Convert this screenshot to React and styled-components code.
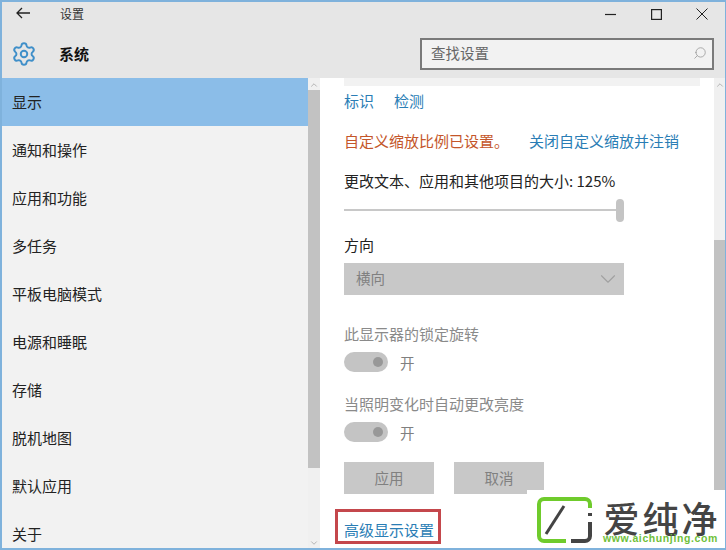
import React from "react";
import styled, { createGlobalStyle } from "styled-components";
import { ChevronDown, ChevronUp, Search, Settings } from "lucide-react";

const GlobalStyle = createGlobalStyle`
  html, body {
    margin: 0;
    padding: 0;
    background: #fff;
  }
  * {
    box-sizing: border-box;
  }
`;

const Window = styled.div`
  position: relative;
  width: 726px;
  height: 550px;
  display: flex;
  flex-direction: column;
  overflow: hidden;
  border: 1px solid #7fb2dc;
  border-width: 2px 1px 2px 2px;
  font-family: "Noto Sans CJK SC", "Noto Sans", sans-serif;
  font-size: 14px;
  color: #222;
`;

const Header = styled.header`
  height: 76px;
  flex: none;
  background: #e6e6e6;
`;

const TitleBar = styled.div`
  height: 22px;
  display: flex;
  align-items: center;
`;

const BackButton = styled.span`
  width: 58px;
  padding-left: 14px;
  display: flex;
  align-items: center;
`;

const WindowTitle = styled.span`
  flex: 1;
  font-size: 12px;
  color: #333;
`;

const WindowControls = styled.div`
  display: flex;
`;

const WindowControl = styled.span`
  width: 46px;
  height: 20px;
  margin-top: 2px;
  display: flex;
  align-items: center;
  justify-content: center;
`;

const SectionBar = styled.div`
  height: 54px;
  display: flex;
  align-items: center;
  padding: 6px 11px 0 9px;
`;

const SectionIcon = styled(Settings)`
  color: #3f8fc9;
  flex: none;
`;

const SectionTitle = styled.h1`
  flex: 1;
  margin: 0 0 2px 22px;
  font-size: 15px;
  font-weight: 700;
  color: #111;
`;

const SearchBox = styled.div`
  width: 294px;
  height: 32px;
  display: flex;
  align-items: center;
  justify-content: space-between;
  padding: 0 5px 3px 9px;
  background: #f2f2f2;
  border: 2px solid #7a7a7a;
  font-size: 14.5px;
  color: #666;
`;

const SearchIcon = styled(Search)`
  color: #9a9a9a;
  transform: scaleX(-1);
`;

const Body = styled.div`
  flex: 1;
  min-height: 0;
  display: flex;
`;

const Sidebar = styled.nav`
  width: 306px;
  flex: none;
  background: #f2f2f2;
`;

const NavItem = styled.div`
  height: 48px;
  display: flex;
  align-items: center;
  padding: 0 0 2px 10px;
  font-size: 15px;
  color: #222;
  background: ${(p) => (p.$active ? "#8bbde8" : "transparent")};
`;

const ScrollTrack = styled.div`
  width: ${(p) => p.$width}px;
  flex: none;
  display: flex;
  flex-direction: column;
  background: #f0f0f0;
`;

const ScrollCap = styled.div`
  height: ${(p) => p.$height}px;
  flex: none;
  display: flex;
  justify-content: center;
  align-items: ${(p) => (p.$end ? "flex-end" : "flex-start")};
  padding-top: ${(p) => (p.$end ? 0 : 2)}px;
  color: #a8a8a8;
`;

const ScrollThumb = styled.div`
  flex: ${(p) => p.$flex};
  background: #c2c2c2;
`;

const Content = styled.main`
  flex: 1;
  min-width: 0;
  background: #fff;
  padding-left: 24px;
`;

const TopStrip = styled.div`
  width: 356px;
  height: 8px;
  background: #f2f2f2;
`;

const Row = styled.div`
  display: flex;
  align-items: center;
  gap: ${(p) => p.$gap || 0}px;
  height: ${(p) => p.$height}px;
  margin-top: ${(p) => p.$top || 0}px;
  font-size: 15px;
  color: ${(p) => p.$color || "#222"};
`;

const Link = styled.span`
  color: #2a7db5;
  font-size: 15px;
`;

const SliderRow = styled.div`
  width: 280px;
  height: 24px;
  margin-top: 3px;
  display: flex;
  align-items: center;
`;

const SliderRail = styled.div`
  flex: 1;
  height: 2px;
  background: #c8c8c8;
`;

const SliderThumb = styled.div`
  width: 8px;
  height: 23px;
  border-radius: 4px;
  background: #c4c4c4;
`;

const Select = styled.div`
  width: 280px;
  height: 32px;
  margin-top: 5px;
  padding: 0 3px 0 12px;
  display: flex;
  align-items: center;
  justify-content: space-between;
  background: #c8c8c8;
  color: #808080;
  font-size: 14.5px;
`;

const SelectLabel = styled.span`
  margin-bottom: 4px;
`;

const ToggleRow = styled.div`
  display: flex;
  align-items: center;
  gap: 12px;
  height: 20px;
  margin-top: 6px;
  font-size: 14.5px;
  color: #808080;
`;

const Toggle = styled.span`
  width: 44px;
  height: 20px;
  border-radius: 10px;
  padding-right: 5px;
  display: flex;
  align-items: center;
  justify-content: flex-end;
  background: #c4c4c4;
`;

const ToggleKnob = styled.span`
  width: 10px;
  height: 10px;
  border-radius: 50%;
  background: #989898;
`;

const ButtonRow = styled.div`
  display: flex;
  gap: 20px;
  margin-top: 20px;
`;

const Button = styled.div`
  width: 90px;
  height: 32px;
  padding-bottom: 2px;
  display: flex;
  align-items: center;
  justify-content: center;
  background: #c8c8c8;
  color: #808080;
  font-size: 14.5px;
`;

const AdvancedBox = styled.div`
  display: inline-flex;
  align-items: center;
  height: 35px;
  margin: 15px 0 0 -9px;
  padding: 5px 4px 0 6px;
  border: 3px solid #c4474c;
`;

const Watermark = styled.div`
  position: absolute;
  right: -1px;
  bottom: -2px;
  width: 199px;
  height: 60px;
  display: flex;
  align-items: center;
  gap: 10px;
  padding-left: 10px;
  background: #fff;
`;

const BrandText = styled.div`
  display: flex;
  flex-direction: column;
  align-items: center;
  margin-top: 4px;
`;

const BrandName = styled.div`
  font-size: 36px;
  line-height: 32px;
  letter-spacing: 3px;
  margin-right: -3px;
  font-weight: 500;
  color: #444;
`;

const BrandUrl = styled.div`
  font-family: "Liberation Sans", sans-serif;
  font-size: 10.5px;
  line-height: 11px;
  font-weight: 700;
  letter-spacing: 0.6px;
  color: #6fbf3a;
`;

const navItems = ["显示", "通知和操作", "应用和功能", "多任务", "平板电脑模式", "电源和睡眠", "存储", "脱机地图", "默认应用", "关于"];

function BackArrow() {
  return (
    <svg width="14" height="12" viewBox="0 0 14 12" fill="none" stroke="#222" strokeWidth="1.3">
      <path d="M14 6H1M6 1 1 6l5 5" />
    </svg>
  );
}

function Logo() {
  return (
    <svg width="56" height="46" viewBox="0 0 56 46" fill="none" style={{ flex: "none" }}>
      <path d="M53 11V7a5 5 0 0 0-5-5H7a5 5 0 0 0-5 5v32a5 5 0 0 0 5 5h22" stroke="#6fcb2c" strokeWidth="4" />
      <path d="M9 37 27 9" stroke="#444" strokeWidth="3" />
      <path d="M34 44h14a5 5 0 0 0 5-5V25M53 19v-3" stroke="#444" strokeWidth="4" />
    </svg>
  );
}

export default function App() {
  return (
    <>
      <GlobalStyle />
      <Window>
        <Header>
          <TitleBar>
            <BackButton>
              <BackArrow />
            </BackButton>
            <WindowTitle>设置</WindowTitle>
            <WindowControls>
              <WindowControl>
                <svg width="11" height="11" viewBox="0 0 11 11" stroke="#222" strokeWidth="1.2">
                  <path d="M0 5.5h11" />
                </svg>
              </WindowControl>
              <WindowControl>
                <svg width="11" height="11" viewBox="0 0 11 11" stroke="#222" fill="none" strokeWidth="1.2">
                  <rect x="0.6" y="0.6" width="9.8" height="9.8" />
                </svg>
              </WindowControl>
              <WindowControl>
                <svg width="12" height="12" viewBox="0 0 12 12" stroke="#222" strokeWidth="1">
                  <path d="m0.5 0.5 11 11M11.5 0.5l-11 11" />
                </svg>
              </WindowControl>
            </WindowControls>
          </TitleBar>
          <SectionBar>
            <SectionIcon size={26} strokeWidth={1.8} />
            <SectionTitle>系统</SectionTitle>
            <SearchBox>
              查找设置
              <SearchIcon size={14} strokeWidth={1.4} />
            </SearchBox>
          </SectionBar>
        </Header>
        <Body>
          <Sidebar>
            {navItems.map((item, i) => (
              <NavItem key={item} $active={i === 0}>
                {item}
              </NavItem>
            ))}
          </Sidebar>
          <ScrollTrack $width={12}>
            <ScrollCap $height={12}>
              <ChevronUp size={10} />
            </ScrollCap>
            <ScrollThumb $flex="378 0 0" />
            <ScrollCap $height={80} $end>
              <ChevronDown size={10} />
            </ScrollCap>
          </ScrollTrack>
          <Content>
            <TopStrip />
            <Row $height={30} $gap={20} $top={-1}>
              <Link>标识</Link>
              <Link>检测</Link>
            </Row>
            <Row $height={30} $gap={20} $top={10} $color="#c4562a">
              自定义缩放比例已设置。
              <Link>关闭自定义缩放并注销</Link>
            </Row>
            <Row $height={30} $top={10}>
              更改文本、应用和其他项目的大小: 125%
            </Row>
            <SliderRow>
              <SliderRail />
              <SliderThumb />
            </SliderRow>
            <Row $height={28} $top={8}>
              方向
            </Row>
            <Select>
              <SelectLabel>横向</SelectLabel>
              <ChevronDown size={26} strokeWidth={1} color="#a0a0a0" />
            </Select>
            <Row $height={26} $top={25} $color="#8a8a8a">
              此显示器的锁定旋转
            </Row>
            <ToggleRow>
              <Toggle>
                <ToggleKnob />
              </Toggle>
              开
            </ToggleRow>
            <Row $height={26} $top={18} $color="#8a8a8a">
              当照明变化时自动更改亮度
            </Row>
            <ToggleRow>
              <Toggle>
                <ToggleKnob />
              </Toggle>
              开
            </ToggleRow>
            <ButtonRow>
              <Button>应用</Button>
              <Button>取消</Button>
            </ButtonRow>
            <AdvancedBox>
              <Link>高级显示设置</Link>
            </AdvancedBox>
          </Content>
          <ScrollTrack $width={11}>
            <ScrollCap $height={162}>
              <ChevronUp size={10} />
            </ScrollCap>
            <ScrollThumb $flex="1 0 0" />
          </ScrollTrack>
        </Body>
        <Watermark>
          <Logo />
          <BrandText>
            <BrandName>爱纯净</BrandName>
            <BrandUrl>www.aichunjing.com</BrandUrl>
          </BrandText>
        </Watermark>
      </Window>
    </>
  );
}
